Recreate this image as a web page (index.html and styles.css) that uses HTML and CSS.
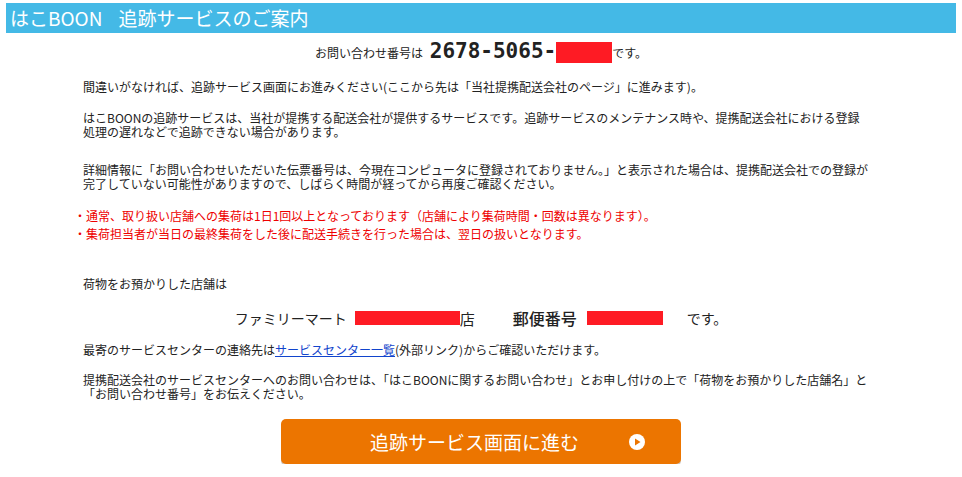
FILE: index.html
```html
<!DOCTYPE html>
<html lang="ja">
<head>
<meta charset="utf-8">
<title>はこBOON 追跡サービスのご案内</title>
<link rel="stylesheet" href="styles.css">
</head>
<body>
<h1 class="title"><span>はこBOON</span><span class="title-sub">追跡サービスのご案内</span></h1>

<div class="refline">
  <span class="ref-label">お問い合わせ番号は</span>
  <span class="ref-num">2678-5065-</span><span class="redact redact-ref"></span><span class="ref-label">です。</span>
</div>

<p class="txt p1">間違いがなければ、追跡サービス画面にお進みください(ここから先は「当社提携配送会社のページ」に進みます)。</p>

<p class="txt p2">はこBOONの追跡サービスは、当社が提携する配送会社が提供するサービスです。追跡サービスのメンテナンス時や、提携配送会社における登録<br>処理の遅れなどで追跡できない場合があります。</p>

<p class="txt p3">詳細情報に「お問い合わせいただいた伝票番号は、今現在コンピュータに登録されておりません。」と表示された場合は、提携配送会社での登録が<br>完了していない可能性がありますので、しばらく時間が経ってから再度ご確認ください。</p>

<div class="notes">
  <div>・通常、取り扱い店舗への集荷は1日1回以上となっております（店舗により集荷時間・回数は異なります）。</div>
  <div>・集荷担当者が当日の最終集荷をした後に配送手続きを行った場合は、翌日の扱いとなります。</div>
</div>

<p class="txt p4">荷物をお預かりした店舗は</p>

<div class="store">
  <span class="store-name">ファミリーマート</span>
  <span class="redact redact-store"></span>
  <span class="store-suffix">店</span>
  <span class="zip-label">郵便番号</span>
  <span class="redact redact-zip"></span>
  <span class="store-end">です。</span>
</div>

<p class="txt p5">最寄のサービスセンターの連絡先は<a class="link" href="#">サービスセンター一覧</a>(外部リンク)からご確認いただけます。</p>

<p class="txt p6">提携配送会社のサービスセンターへのお問い合わせは、「はこBOONに関するお問い合わせ」とお申し付けの上で「荷物をお預かりした店舗名」と<br>「お問い合わせ番号」をお伝えください。</p>

<a class="go-btn" href="#">
  <span class="go-text">追跡サービス画面に進む</span>
  <svg class="go-icon" width="16" height="16" viewBox="0 0 16 16" aria-hidden="true">
    <circle cx="8" cy="8" r="8" fill="#ffffff"/>
    <path d="M6 4.5 L11.5 8 L6 11.5 Z" fill="#ec7500"/>
  </svg>
</a>
</body>
</html>
```

FILE: styles.css
```css
html, body {
  background: #ffffff;
}
body {
  margin: 0;
  padding: 3px 6px 0;
  font-family: "Noto Sans CJK JP", "Noto Sans", sans-serif;
  font-size: 12px;
  color: #222222;
}
.title {
  margin: 0;
  height: 30px;
  line-height: 30px;
  padding-left: 4px;
  background: #44b9e6;
  color: #ffffff;
  font-size: 19px;
  font-weight: normal;
  white-space: nowrap;
}
.title-sub {
  margin-left: 16px;
}
.refline {
  margin-top: 5px;
  height: 26px;
  line-height: 26px;
  text-align: center;
  white-space: nowrap;
}
.ref-label {
  font-size: 12px;
}
.ref-num {
  font-family: "DejaVu Sans Mono", monospace;
  font-weight: bold;
  font-size: 21px;
  margin-left: 4px;
  color: #222222;
}
.redact {
  display: inline-block;
  background: #fe1b24;
}
.redact-ref {
  width: 56px;
  height: 21px;
  vertical-align: -5px;
}
.txt {
  margin: 0 0 0 77px;
  line-height: 14px;
  white-space: nowrap;
}
.p1 { margin-top: 16px; }
.p2 { margin-top: 17px; }
.p3 { margin-top: 24px; }
.notes {
  margin: 16px 0 0 68px;
  line-height: 18px;
  color: #ee0000;
  white-space: nowrap;
}
.p4 { margin-top: 34px; }
.store {
  margin-top: 17px;
  height: 20px;
  display: flex;
  align-items: center;
  justify-content: center;
  font-size: 14px;
  white-space: nowrap;
}
.store-name { margin-right: 8px; }
.redact-store {
  width: 105px;
  height: 14px;
}
.store-suffix { font-size: 15px; }
.zip-label {
  font-size: 16px;
  font-weight: 500;
  margin-left: 38px;
  margin-right: 10px;
}
.redact-zip {
  width: 76px;
  height: 14px;
}
.store-end { margin-left: 24px; }
.p5 { margin-top: 15px; }
.link {
  color: #1144cc;
  text-decoration: underline;
}
.p6 { margin-top: 16px; }
.go-btn {
  margin: 18px auto 0;
  width: 400px;
  height: 45px;
  display: flex;
  align-items: center;
  background: #ec7500;
  border-radius: 5px;
  box-shadow: 0 2px 0 #d2c8bf;
  color: #ffffff;
  text-decoration: none;
  font-size: 19px;
}
.go-text {
  margin-left: 89px;
}
.go-icon {
  margin-left: 50px;
}
```
